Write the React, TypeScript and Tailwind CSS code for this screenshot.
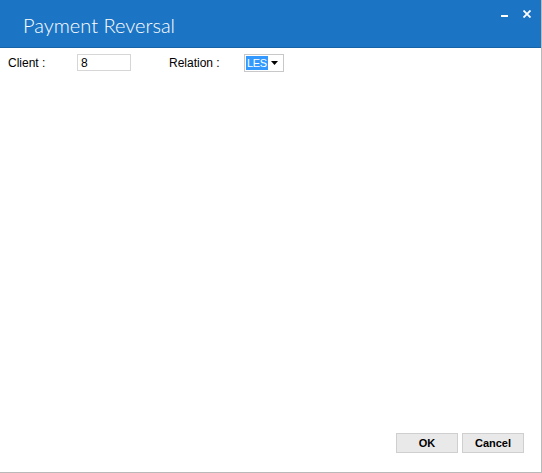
export default function App() {
  return (
    <div className="w-[542px] h-[473px] flex flex-col bg-white border-r border-b border-[#b9b9b9] font-['Liberation_Sans',Arial,sans-serif] text-[12px] text-black overflow-hidden">
      {/* title bar */}
      <div className="h-[48px] shrink-0 bg-[#1c75c4] border-b border-[#1763a8] flex items-start justify-between">
        <div className="pl-[23px] pt-[13px] text-[20px] leading-[25px] font-light text-white font-['Lato',sans-serif]">
          Payment Reversal
        </div>
        <div className="flex items-start gap-[15px] pr-[10px] pt-[9px]">
          <div className="w-[7px] h-[2px] bg-white mt-[6px]" />
          <svg width="8" height="8" viewBox="0 0 8 8" className="mt-[1px]">
            <path d="M0.5 0.5 L7.5 7.5 M7.5 0.5 L0.5 7.5" stroke="white" strokeWidth="1.8" />
          </svg>
        </div>
      </div>

      {/* form row */}
      <div className="flex items-center h-[25px] mt-[2px]">
        <span className="w-[77px] shrink-0 pl-[8px]">Client :</span>
        <input
          defaultValue="8"
          className="w-[54px] h-[17px] border border-[#d6d6d6] px-[3px] text-[12px] outline-none"
        />
        <span className="ml-[38px] w-[75px] shrink-0">Relation :</span>
        <div className="flex items-center w-[40px] h-[18px] border border-[#c8c8c8] pl-[1px]">
          <span className="bg-[#3399ff] text-white text-[11px] leading-[14px] px-[1px] tracking-[-0.3px]">LES</span>
          <svg width="7" height="4" viewBox="0 0 7 4" className="ml-auto mr-[5px]">
            <path d="M0 0 H7 L3.5 4 Z" fill="black" />
          </svg>
        </div>
      </div>

      <div className="flex-1" />

      {/* buttons */}
      <div className="flex justify-end gap-[4px] pr-[17px] pb-[19px]">
        <button className="w-[62px] h-[20px] bg-[#e9e9e9] border border-[#cfcfcf] text-[11px] font-bold">
          OK
        </button>
        <button className="w-[62px] h-[20px] bg-[#e9e9e9] border border-[#cfcfcf] text-[11px] font-bold">
          Cancel
        </button>
      </div>
    </div>
  );
}
